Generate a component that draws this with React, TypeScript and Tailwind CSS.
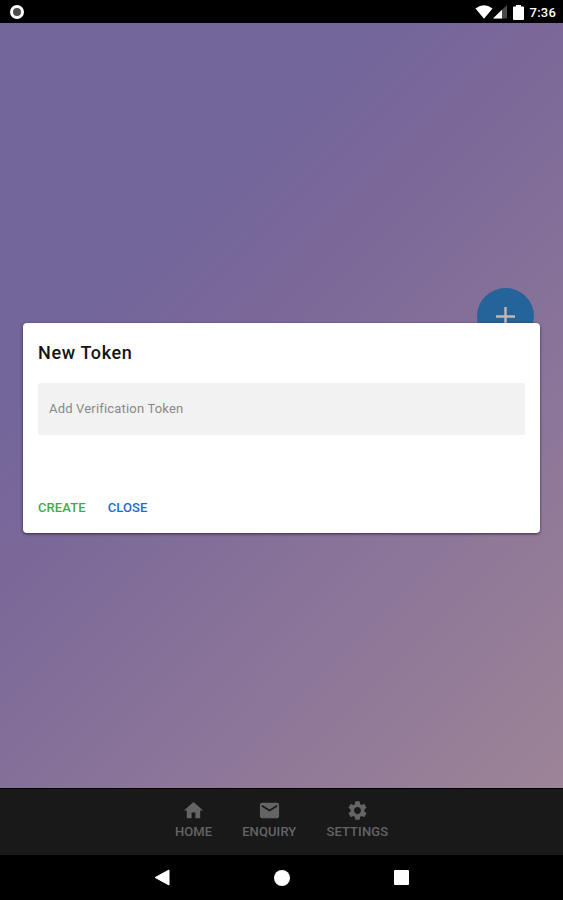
import { MdHome, MdMail, MdSettings } from "react-icons/md"

function StatusBar() {
  return (
    <header className="flex justify-between items-center w-full h-[23px] shrink-0 pl-[10px] pr-[7px] bg-black text-white">
      <span className="w-[14px] h-[14px] mt-px rounded-full border-[3px] border-white bg-[#4c4c4c]" />
      <div className="flex items-center h-full">
        <svg width="18" height="14" viewBox="0 0 18 14" className="mt-px">
          <path d="M0.5 3.5Q9 -3 17.5 3.5L9 13.8Z" fill="white" />
        </svg>
        <svg width="14" height="14" viewBox="0 0 14 14" className="mt-px">
          <path d="M0 13.5L14 0V13.5Z" fill="#4a4a4a" />
          <path d="M0 13.5L9 4.8V13.5Z" fill="white" />
        </svg>
        <svg width="11" height="15" viewBox="0 0 11 15" className="ml-[6px] mt-px">
          <path
            d="M3 0H8V1.5H10Q11 1.5 11 2.5V14Q11 15 10 15H1Q0 15 0 14V2.5Q0 1.5 1 1.5H3Z"
            fill="white"
          />
        </svg>
        <span className="ml-[6px] mt-[2px] text-[13px] leading-none font-medium tracking-[0.2px]">
          7:36
        </span>
      </div>
    </header>
  )
}

function TokenDialog() {
  return (
    <section className="absolute top-[299.5px] left-[23px] w-[517.4px] h-[210.5px] px-[15px] rounded-[4px] bg-white shadow-[0_1px_3px_rgba(30,15,50,0.75)]">
      <h2 className="pt-[18.5px] text-[18px] leading-6 font-medium tracking-[0.65px] text-[#141414]">
        New Token
      </h2>
      <input
        type="text"
        placeholder="Add Verification Token"
        className="block w-full h-[52px] mt-[18px] px-[11px] pb-[2px] rounded-[2px] bg-[#f2f2f2] text-[13px] text-[#888] placeholder:text-[#888] tracking-[0.18px] outline-none"
      />
      <div className="flex gap-[22px] mt-[63px] text-[13px] leading-5 tracking-[0.1px]">
        <button className="font-medium text-[#43aa47]">CREATE</button>
        <button className="font-medium text-[#1c6dcb]">CLOSE</button>
      </div>
    </section>
  )
}

function TabBar() {
  return (
    <nav className="flex justify-center gap-[30px] w-full h-[67px] shrink-0 pt-[10px] border-t border-black bg-[#191919] text-[#646464] text-[13px] leading-4 font-medium tracking-[0.1px]">
      <div className="flex flex-col items-center gap-[2px]">
        <MdHome size={23} />
        <span>HOME</span>
      </div>
      <div className="flex flex-col items-center gap-[2px]">
        <MdMail size={23} />
        <span>ENQUIRY</span>
      </div>
      <div className="flex flex-col items-center gap-[2px]">
        <MdSettings size={23} />
        <span>SETTINGS</span>
      </div>
    </nav>
  )
}

function NavigationBar() {
  return (
    <footer className="flex justify-center items-center gap-[104px] w-full h-[45px] shrink-0 bg-black">
      <svg width="16" height="17" viewBox="0 0 16 17">
        <path d="M15 1V16L1.2 8.5Z" fill="white" stroke="white" strokeLinejoin="round" />
      </svg>
      <span className="w-4 h-4 rounded-full bg-white" />
      <span className="w-[15px] h-[15px] rounded-[1px] bg-white" />
    </footer>
  )
}

export default function App() {
  return (
    <div className="flex flex-col w-[563px] h-[900px] overflow-hidden font-['Roboto',sans-serif]">
      <StatusBar />
      <main className="relative flex-1 bg-[linear-gradient(135deg,#72669b_0%,#73669a_28%,#7b6899_42%,#8b7599_69%,#9d8497_100%)]">
        <button className="absolute top-[265px] left-[477px] flex justify-center items-center w-[57px] h-[57px] rounded-full bg-[#25639b]">
          <svg width="19" height="19" viewBox="0 0 19 19">
            <path d="M9.5 0V19M0 9.5H19" stroke="#bdb9b9" strokeWidth="2.4" />
          </svg>
        </button>
        <TokenDialog />
      </main>
      <TabBar />
      <NavigationBar />
    </div>
  )
}
